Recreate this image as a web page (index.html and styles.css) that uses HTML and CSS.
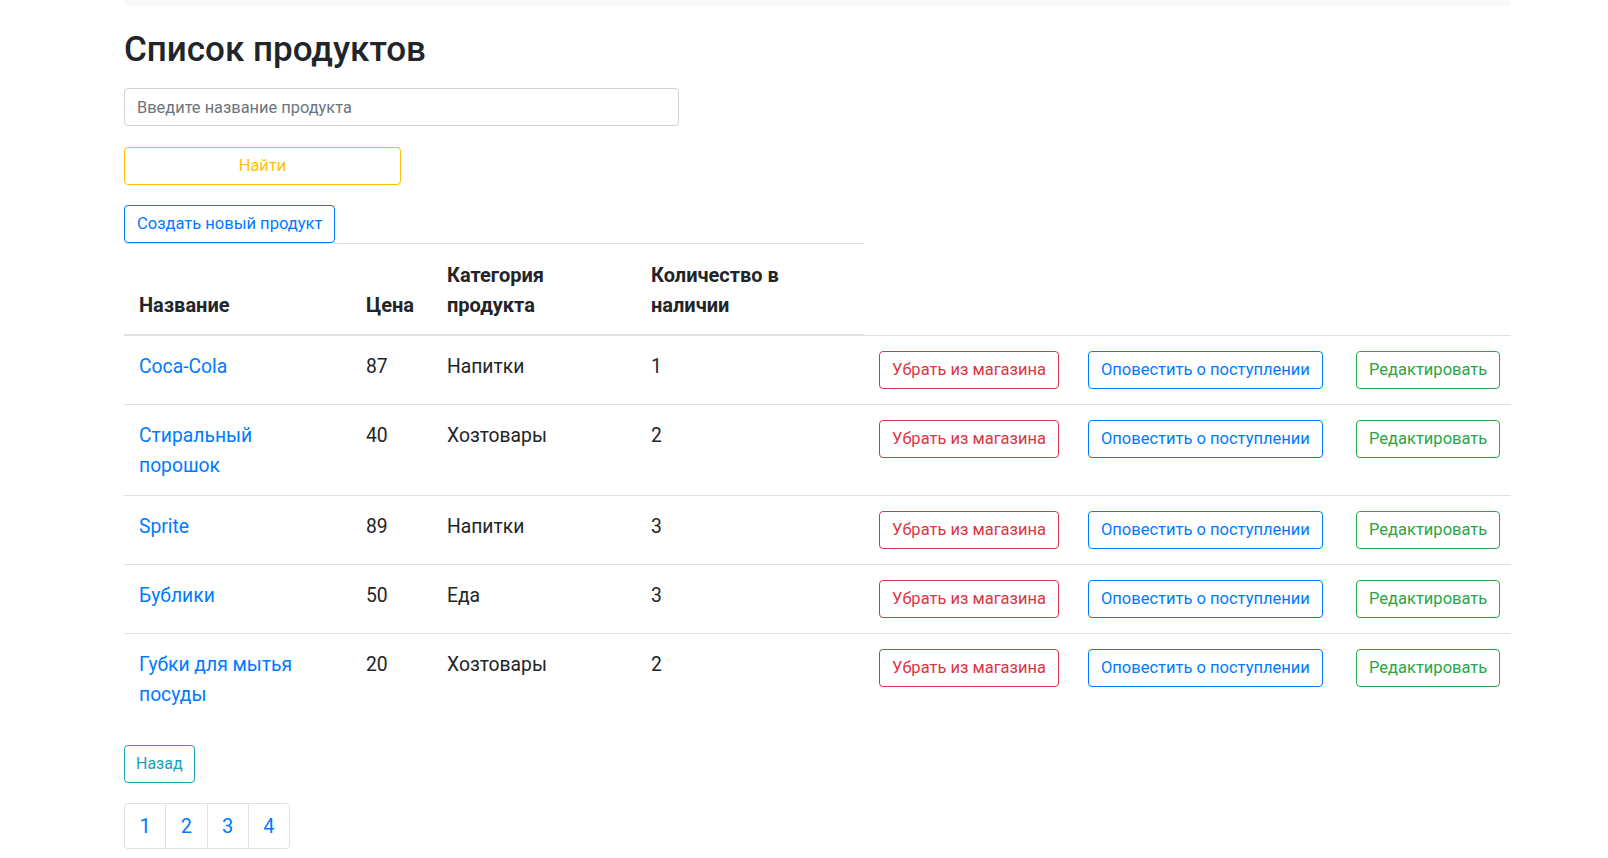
FILE: index.html
```html
<!DOCTYPE html>
<html lang="ru">
<head>
<meta charset="utf-8">
<title>Список продуктов</title>
<link rel="stylesheet" href="styles.css">
</head>
<body>
<div class="topbar"></div>
<main class="page">
  <h1 class="page-title">Список продуктов</h1>
  <form class="search">
    <input class="field" type="text" placeholder="Введите название продукта">
    <button class="btn btn-warning search-btn" type="button">Найти</button>
  </form>
  <a class="btn btn-primary" href="#">Создать новый продукт</a>
  <table class="products">
    <colgroup>
      <col class="c-name"><col class="c-price"><col class="c-cat"><col class="c-qty">
      <col class="c-a1"><col class="c-a2"><col class="c-a3">
    </colgroup>
    <thead>
      <tr><th>Название</th><th>Цена</th><th>Категория продукта</th><th>Количество в наличии</th></tr>
    </thead>
    <tbody>
      <tr>
        <td><a class="link" href="#">Coca-Cola</a></td><td>87</td><td>Напитки</td><td>1</td>
        <td class="act"><a class="btn btn-danger" href="#">Убрать из магазина</a></td>
        <td class="act"><a class="btn btn-primary" href="#">Оповестить о поступлении</a></td>
        <td class="act"><a class="btn btn-success" href="#">Редактировать</a></td>
      </tr>
      <tr>
        <td><a class="link" href="#">Стиральный порошок</a></td><td>40</td><td>Хозтовары</td><td>2</td>
        <td class="act"><a class="btn btn-danger" href="#">Убрать из магазина</a></td>
        <td class="act"><a class="btn btn-primary" href="#">Оповестить о поступлении</a></td>
        <td class="act"><a class="btn btn-success" href="#">Редактировать</a></td>
      </tr>
      <tr>
        <td><a class="link" href="#">Sprite</a></td><td>89</td><td>Напитки</td><td>3</td>
        <td class="act"><a class="btn btn-danger" href="#">Убрать из магазина</a></td>
        <td class="act"><a class="btn btn-primary" href="#">Оповестить о поступлении</a></td>
        <td class="act"><a class="btn btn-success" href="#">Редактировать</a></td>
      </tr>
      <tr>
        <td><a class="link" href="#">Бублики</a></td><td>50</td><td>Еда</td><td>3</td>
        <td class="act"><a class="btn btn-danger" href="#">Убрать из магазина</a></td>
        <td class="act"><a class="btn btn-primary" href="#">Оповестить о поступлении</a></td>
        <td class="act"><a class="btn btn-success" href="#">Редактировать</a></td>
      </tr>
      <tr>
        <td><a class="link" href="#">Губки для мытья посуды</a></td><td>20</td><td>Хозтовары</td><td>2</td>
        <td class="act"><a class="btn btn-danger" href="#">Убрать из магазина</a></td>
        <td class="act"><a class="btn btn-primary" href="#">Оповестить о поступлении</a></td>
        <td class="act"><a class="btn btn-success" href="#">Редактировать</a></td>
      </tr>
    </tbody>
  </table>
  <div class="back-row"><a class="btn btn-info btn-back" href="#">Назад</a></div>
  <nav class="pager">
    <a class="page-link" href="#">1</a>
    <a class="page-link" href="#">2</a>
    <a class="page-link" href="#">3</a>
    <a class="page-link" href="#">4</a>
  </nav>
</main>
</body>
</html>
```

FILE: styles.css
```css
* { box-sizing: border-box; }
html, body { margin: 0; padding: 0; background: #fff; }
body {
  font-family: Roboto, "Liberation Sans", sans-serif;
  font-size: 16px;
  line-height: 1.5;
  color: #212529;
}
.topbar {
  margin-left: 124px;
  width: 1387px;
  height: 6px;
  background: #f8f9fa;
}
.page {
  margin-left: 124px;
  width: 1387px;
}
.page-title {
  margin: 23px 0 17px;
  font-size: 35px;
  font-weight: 500;
  line-height: 42px;
}
.search { margin: 0; }
.field {
  display: block;
  width: 555px;
  height: 38px;
  padding: 6px 12px;
  font-family: inherit;
  font-size: 16.4px;
  line-height: 24px;
  color: #495057;
  border: 1px solid #ced4da;
  border-radius: 4px;
  margin-bottom: 21px;
}
.field::placeholder { color: #6c757d; opacity: 1; }
.btn {
  display: inline-block;
  vertical-align: top;
  padding: 6px 12px;
  font-family: inherit;
  font-size: 16.5px;
  line-height: 24px;
  text-align: center;
  text-decoration: none;
  white-space: nowrap;
  background: transparent;
  border: 1px solid currentColor;
  border-radius: 4px;
  cursor: pointer;
}
.search-btn { display: block; width: 277px; margin-bottom: 20px; }
.btn-back { font-size: 16px; padding: 6px 11px; }
.btn-warning { color: #ffc107; border-color: #ffc107; }
.btn-primary { color: #007bff; border-color: #007bff; }
.btn-danger { color: #dc3545; border-color: #dc3545; }
.btn-success { color: #28a745; border-color: #28a745; }
.btn-info { color: #17a2b8; border-color: #17a2b8; }

.products {
  width: 1387px;
  table-layout: fixed;
  border-collapse: collapse;
  font-size: 19.3px;
  line-height: 30px;
  margin-bottom: 21px;
}
.c-name { width: 227px; }
.c-price { width: 81px; }
.c-cat { width: 204px; }
.c-qty { width: 228px; }
.c-a1 { width: 209px; }
.c-a2 { width: 268px; }
.c-a3 { width: 170px; }
.products th,
.products td {
  padding: 16px 15px 14px;
  text-align: left;
  vertical-align: top;
  border-top: 1px solid #dee2e6;
}
.products th {
  font-size: 20px;
  font-weight: 700;
  vertical-align: bottom;
  border-bottom: 2px solid #dee2e6;
}
.products td.act {
  padding: 15px;
  font-size: 16px;
  line-height: 24px;
}
.link { color: #007bff; text-decoration: none; }

.back-row { margin-bottom: 20px; }
.pager {
  display: flex;
  width: max-content;
}
.page-link {
  display: block;
  padding: 10px 14.5px;
  margin-left: -1px;
  font-size: 20px;
  line-height: 24px;
  color: #007bff;
  text-decoration: none;
  border: 1px solid #dee2e6;
}
.page-link:first-child { margin-left: 0; border-radius: 4px 0 0 4px; }
.page-link:last-child { border-radius: 0 4px 4px 0; }
```
